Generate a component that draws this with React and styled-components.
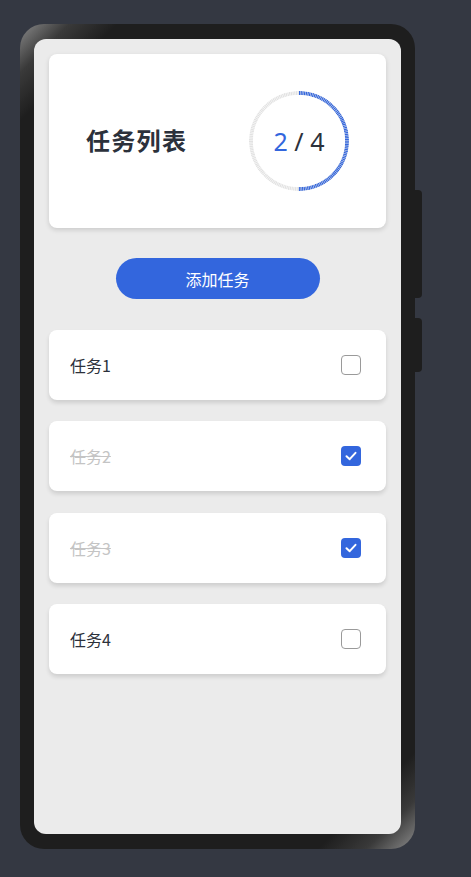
import styled, { createGlobalStyle } from 'styled-components'

const tasks = [
  { id: 1, name: '任务1', done: false },
  { id: 2, name: '任务2', done: true },
  { id: 3, name: '任务3', done: true },
  { id: 4, name: '任务4', done: false }
]

const GlobalStyle = createGlobalStyle`
  html, body {
    margin: 0;
    padding: 0;
    background: #343842;
    font-family: 'Noto Sans CJK SC', 'Noto Sans', sans-serif;
  }
`

const Progress = ({ done, total }) => {
  const r = 48
  const c = 2 * Math.PI * r
  const part = (done / total) * c
  return (
    <RingWrap>
      <svg width="104" height="104" viewBox="0 0 104 104">
        <mask id="ticks">
          <circle cx="52" cy="52" r={r} fill="none" stroke="#fff" strokeWidth="4" strokeDasharray="1.2 0.5" />
        </mask>
        <circle cx="52" cy="52" r={r} fill="none" stroke="#e2e2e2" strokeWidth="4" mask="url(#ticks)" />
        <circle
          cx="52" cy="52" r={r} fill="none" stroke="#3366dd" strokeWidth="4"
          strokeDasharray={`${part} ${c}`}
          transform="rotate(-90 52 52)"
          mask="url(#ticks)"
        />
      </svg>
      <RingText>
        <Done>{done}</Done> / {total}
      </RingText>
    </RingWrap>
  )
}

const Check = () => (
  <svg width="14" height="14" viewBox="0 0 14 14">
    <path d="M2.5 7.2 L5.7 10.2 L11.5 3.8" fill="none" stroke="#fff" strokeWidth="2" strokeLinecap="round" strokeLinejoin="round" />
  </svg>
)

const App = () => {
  const doneCount = tasks.filter(t => t.done).length
  return (
    <>
      <GlobalStyle />
      <Stage>
        <Phone>
          <SideKey top={166} height={108} />
          <SideKey top={294} height={54} />
          <Screen>
            <Header>
              <Title>任务列表</Title>
              <Progress done={doneCount} total={tasks.length} />
            </Header>
            <AddButton>添加任务</AddButton>
            <List>
              {tasks.map(task => (
                <TaskCard key={task.id}>
                  <TaskName done={task.done}>{task.name}</TaskName>
                  <Box checked={task.done}>{task.done && <Check />}</Box>
                </TaskCard>
              ))}
            </List>
          </Screen>
        </Phone>
      </Stage>
    </>
  )
}

const Stage = styled.div`
  width: 471px;
  height: 877px;
  padding: 24px 0 0 20px;
  box-sizing: border-box;
`

const Phone = styled.div`
  position: relative;
  width: 395px;
  height: 825px;
  box-sizing: border-box;
  padding: 15px 14px;
  border-radius: 24px;
  background: linear-gradient(135deg, #8a8a8a 0%, #3a3a3a 4%, #1e1e1e 8%, #1e1e1e 92%, #3a3a3a 96%, #8a8a8a 100%);
`

const SideKey = styled.div`
  position: absolute;
  right: -7px;
  top: ${p => p.top}px;
  width: 7px;
  height: ${p => p.height}px;
  background: #1e1e1e;
  border-radius: 0 4px 4px 0;
`

const Screen = styled.div`
  height: 100%;
  box-sizing: border-box;
  background: #ebebeb;
  border-radius: 12px;
  padding: 15px 15px;
  display: flex;
  flex-direction: column;
  align-items: stretch;
`

const Header = styled.div`
  height: 174px;
  background: #fff;
  border-radius: 8px;
  box-shadow: 0 2px 5px rgba(0, 0, 0, 0.14);
  display: flex;
  align-items: center;
  justify-content: space-between;
  padding: 0 35px 0 37px;
`

const Title = styled.h1`
  margin: 0 0 4px;
  font-size: 24px;
  font-weight: 700;
  color: #2c313b;
  letter-spacing: 1.3px;
`

const RingWrap = styled.div`
  position: relative;
  width: 104px;
  height: 104px;
  svg { display: block; }
`

const RingText = styled.div`
  position: absolute;
  inset: 0;
  display: flex;
  align-items: center;
  justify-content: center;
  font-family: 'Noto Sans', sans-serif;
  font-size: 25px;
  color: #2c313b;
  white-space: pre;
`

const Done = styled.span`
  color: #3366dd;
`

const AddButton = styled.button`
  align-self: center;
  margin-top: 30px;
  width: 204px;
  height: 41px;
  border: none;
  border-radius: 21px;
  background: #3366dd;
  color: #fff;
  font-family: 'Noto Sans CJK SC', sans-serif;
  font-size: 16px;
  padding: 0;
`

const List = styled.div`
  margin-top: 31px;
  display: flex;
  flex-direction: column;
  gap: 21.3px;
`

const TaskCard = styled.div`
  height: 70px;
  background: #fff;
  border-radius: 8px;
  box-shadow: 0 3px 4px rgba(0, 0, 0, 0.12);
  display: flex;
  align-items: center;
  justify-content: space-between;
  padding: 0 25px 0 21px;
`

const TaskName = styled.span`
  font-size: 16px;
  color: ${p => (p.done ? '#c4c4c4' : '#2c313b')};
  text-decoration: ${p => (p.done ? 'line-through' : 'none')};
`

const Box = styled.div`
  width: 20px;
  height: 20px;
  box-sizing: border-box;
  border-radius: 4px;
  border: ${p => (p.checked ? 'none' : '1px solid #9a9a9a')};
  background: ${p => (p.checked ? '#3366dd' : '#fff')};
  display: flex;
  align-items: center;
  justify-content: center;
`

export default App
